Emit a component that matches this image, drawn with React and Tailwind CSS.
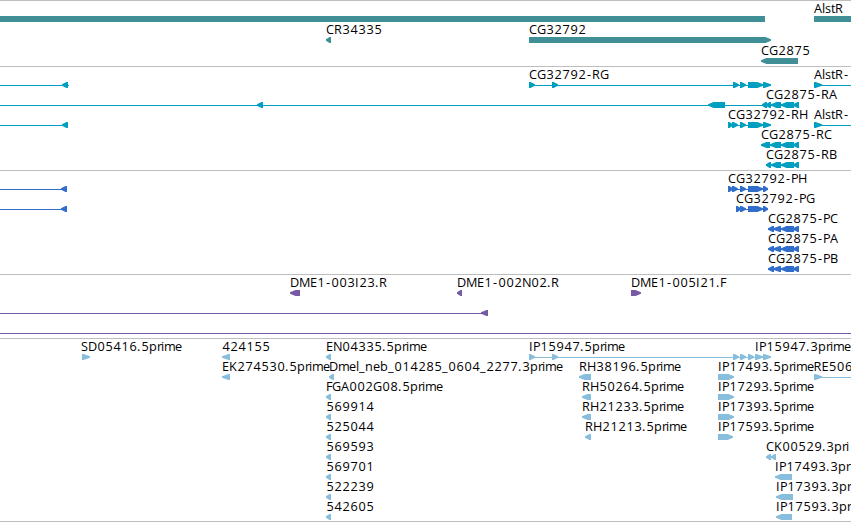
// Horizontal advance of each character in the label face, in pixels.
const ADVANCE = {
  A: 8, C: 8, D: 9, E: 7, F: 6, G: 9, H: 9, I: 4, K: 8, M: 11, N: 9, P: 7, R: 8, S: 7,
  b: 8, e: 7, i: 3, l: 3, m: 11, n: 8, p: 8, r: 4, s: 6, t: 4,
  '.': 4, '-': 6, _: 6,
};

function positions(text, start) {
  const xs = [];
  let x = start;
  for (const ch of text) {
    xs.push(/[0-9]/.test(ch) ? x + 0.4 : ch === '-' ? x + 1 : x);
    x += ADVANCE[ch] ?? 8;
  }
  return xs.join(' ');
}

// Feature: [kind, from, to]; kind is "L" or "R" (strand), "B" (plain bar) or "-" (connector).
function Feature({ kind, from, to, y }) {
  if (kind === '-') return <rect x={from} y={y + 3} width={to - from} height={1} shapeRendering="crispEdges" />;
  if (kind === 'B') return <rect x={from} y={y} width={to - from} height={6} shapeRendering="crispEdges" />;
  const width = to - from;
  const head = width <= 8 ? width - 1.5 : 5.5;
  const pts =
    kind === 'R'
      ? `${from},${y} ${to - head},${y} ${to},${y + 2.2} ${to},${y + 3.8} ${to - head},${y + 6} ${from},${y + 6}`
      : `${to},${y} ${from + head},${y} ${from},${y + 2.2} ${from},${y + 3.8} ${from + head},${y + 6} ${to},${y + 6}`;
  return <polygon points={pts} />;
}

function Track({ height, rows, className }) {
  return (
    <section className="border-t border-[#bebebe]">
      <svg width="851" height={height} className={`block overflow-hidden ${className}`}>
        {rows.map((row, i) => (
          <g key={i}>
            {row.features.map(([kind, from, to], j) => (
              <Feature key={j} kind={kind} from={from} to={to} y={row.y} />
            ))}
            {(row.labels ?? []).map(([x, text]) => (
              <text key={text + x} x={positions(text, x)} y={row.y - 3} className="fill-black text-[12.7px]">
                {text}
              </text>
            ))}
          </g>
        ))}
      </svg>
    </section>
  );
}

const genes = [
  { y: 15, features: [['B', 0, 765], ['B', 814, 851]], labels: [[814, 'AlstR']] },
  { y: 36, features: [['L', 326, 331], ['R', 529, 771]], labels: [[326, 'CR34335'], [529, 'CG32792']] },
  { y: 57, features: [['L', 761, 798]], labels: [[761, 'CG2875']] },
];

const transcripts = [
  {
    y: 15,
    features: [
      ['-', 0, 69], ['L', 62, 68], ['-', 529, 771], ['R', 529, 535], ['R', 552, 558], ['R', 733, 739],
      ['R', 740, 746], ['R', 748, 763], ['R', 763, 771], ['-', 814, 851], ['R', 814, 822],
    ],
    labels: [[529, 'CG32792-RG'], [814, 'AlstR-']],
  },
  {
    y: 35,
    features: [['-', 0, 799], ['L', 257, 263], ['L', 708, 725], ['L', 762, 767], ['L', 766, 771], ['L', 771, 781], ['L', 781, 794], ['L', 793, 799]],
    labels: [[766, 'CG2875-RA']],
  },
  {
    y: 55,
    features: [
      ['-', 0, 68], ['L', 62, 68], ['-', 728, 771], ['R', 728, 733], ['R', 732, 738], ['R', 740, 746],
      ['R', 748, 763], ['R', 763, 771], ['-', 814, 851], ['R', 814, 822],
    ],
    labels: [[728, 'CG32792-RH'], [814, 'AlstR-']],
  },
  { y: 75, features: [['-', 761, 799], ['L', 761, 770], ['L', 770, 781], ['L', 781, 794], ['L', 793, 799]], labels: [[761, 'CG2875-RC']] },
  { y: 95, features: [['-', 766, 799], ['L', 766, 771], ['L', 771, 781], ['L', 781, 794], ['L', 793, 799]], labels: [[766, 'CG2875-RB']] },
];

const cds = [['-', 768, 799], ['L', 768, 774], ['L', 773, 781], ['L', 781, 794], ['L', 793, 799]];
const proteins = [
  {
    y: 15,
    features: [['-', 0, 67], ['L', 61, 67], ['-', 728, 768], ['R', 728, 733], ['R', 732, 738], ['R', 740, 746], ['R', 748, 763], ['R', 763, 768]],
    labels: [[728, 'CG32792-PH']],
  },
  {
    y: 35,
    features: [['-', 0, 67], ['L', 61, 67], ['-', 736, 768], ['R', 736, 741], ['R', 740, 746], ['R', 748, 763], ['R', 763, 768]],
    labels: [[736, 'CG32792-PG']],
  },
  { y: 55, features: cds, labels: [[768, 'CG2875-PC']] },
  { y: 75, features: cds, labels: [[768, 'CG2875-PA']] },
  { y: 95, features: cds, labels: [[768, 'CG2875-PB']] },
];

const ends = [
  {
    y: 15,
    features: [['L', 290, 300], ['L', 457, 462], ['R', 631, 641]],
    labels: [[290, 'DME1-003I23.R'], [457, 'DME1-002N02.R'], [631, 'DME1-005I21.F']],
  },
  { y: 35, features: [['-', 0, 488], ['L', 481, 488]] },
  { y: 55, features: [['-', 0, 851]] },
];

const cdnas = [
  {
    y: 15,
    features: [
      ['R', 82, 90], ['L', 222, 230], ['L', 326, 331], ['-', 529, 771], ['R', 529, 535], ['R', 552, 558],
      ['R', 733, 739], ['R', 740, 746], ['R', 748, 754], ['R', 755, 763], ['R', 763, 771],
    ],
    labels: [[81, 'SD05416.5prime'], [222, '424155'], [326, 'EN04335.5prime'], [529, 'IP15947.5prime'], [755, 'IP15947.3prime']],
  },
  {
    y: 35,
    features: [['L', 222, 230], ['L', 329, 334], ['L', 579, 591], ['R', 718, 734], ['-', 814, 851], ['R', 814, 822]],
    labels: [[222, 'EK274530.5prime'], [329, 'Dmel_neb_014285_0604_2277.3prime'], [579, 'RH38196.5prime'], [718, 'IP17493.5prime'], [813.5, 'RE506']],
  },
  { y: 55, features: [['L', 326, 331], ['L', 582, 591], ['R', 718, 734]], labels: [[326, 'FGA002G08.5prime'], [582, 'RH50264.5prime'], [718, 'IP17293.5prime']] },
  { y: 75, features: [['L', 326, 331], ['L', 582, 591], ['R', 718, 734]], labels: [[326, '569914'], [582, 'RH21233.5prime'], [718, 'IP17393.5prime']] },
  { y: 95, features: [['L', 326, 331], ['L', 585, 591], ['R', 718, 733]], labels: [[326, '525044'], [585, 'RH21213.5prime'], [718, 'IP17593.5prime']] },
  { y: 115, features: [['L', 326, 331], ['L', 766, 771], ['L', 771, 776]], labels: [[326, '569593'], [766, 'CK00529.3pri']] },
  { y: 135, features: [['L', 326, 331], ['L', 775, 792]], labels: [[326, '569701'], [775, 'IP17493.3pr']] },
  { y: 155, features: [['L', 326, 331], ['L', 776, 793]], labels: [[326, '522239'], [776, 'IP17393.3pr']] },
  { y: 175, features: [['L', 326, 331], ['L', 776, 792]], labels: [[326, '542605'], [776, 'IP17593.3pr']] },
];

export default function App() {
  return (
    <main className="flex h-[522px] w-[851px] flex-col overflow-hidden border-b border-[#bebebe] bg-white font-['Open_Sans',sans-serif]">
      <Track height={65} rows={genes} className="fill-[#408f96]" />
      <Track height={103} rows={transcripts} className="fill-[#009fc0]" />
      <Track height={103} rows={proteins} className="fill-[#316ecb]" />
      <Track height={63} rows={ends} className="fill-[#775aa5]" />
      <Track height={182} rows={cdnas} className="fill-[#88bedd]" />
    </main>
  );
}
